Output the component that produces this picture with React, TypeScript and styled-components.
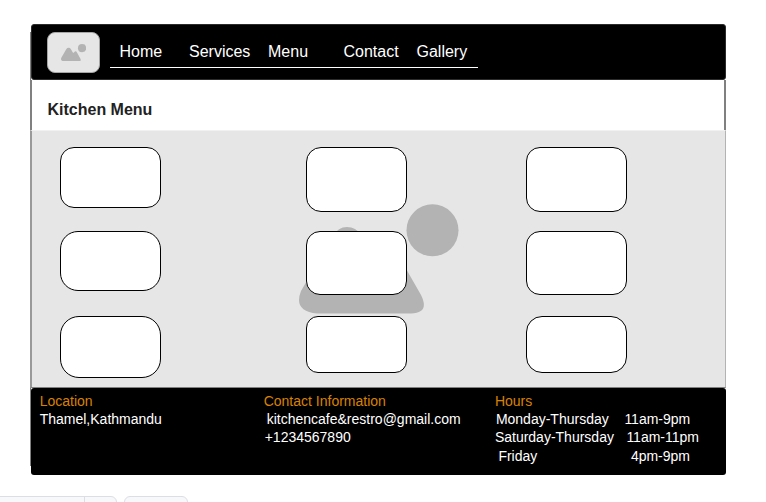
import React from "react";
import styled, { createGlobalStyle } from "styled-components";

const GlobalStyle = createGlobalStyle`
  * { box-sizing: border-box; }
  body {
    margin: 0;
    background: #fff;
    font-family: "Liberation Sans", Arial, sans-serif;
    overflow: hidden;
  }
`;

const Page = styled.div`
  height: 502px;
  padding: 24px 40px 0 30px;
  overflow: hidden;
`;

const Frame = styled.div`
  width: 696px;
  height: 451px;
  display: flex;
  flex-direction: column;
  background: linear-gradient(#808080, #808080) 0 8px / 1px 434px no-repeat;
`;

const Header = styled.header`
  height: 56px;
  margin-left: 1px;
  padding: 8px 0 0 16px;
  display: flex;
  background: #000;
  border: 1px solid #2b2b2b;
  border-radius: 3px;
`;

const Logo = styled.div`
  width: 53px;
  height: 41px;
  margin-top: -1px;
  margin-left: -1px;
  padding: 11px 0 0 13px;
  border: 1px solid #a6a6a6;
  border-radius: 8px;
  background: #e6e6e6;
  svg { display: block; }
`;

const Nav = styled.nav`
  width: 367.5px;
  height: 35px;
  margin-left: 10px;
  padding: 10px 0 0 9.5px;
  display: grid;
  grid-template-columns: 69.5px 79px 75.5px 73px auto;
  border-bottom: 1px solid #fff;
`;

const NavLink = styled.a`
  color: #fff;
  font-size: 16px;
  line-height: 18px;
  white-space: nowrap;
`;

const TitleBar = styled.div`
  height: 50px;
  padding: 21px 0 0 15.5px;
  background: #fff;
  border-left: 2px solid #808080;
  border-right: 2px solid #808080;
`;

const Title = styled.h1`
  margin: 0;
  font-size: 16px;
  line-height: 18px;
  color: #222;
`;

const Gallery = styled.main`
  position: relative;
  height: 258px;
  display: grid;
  grid-template-columns: 246px 220px 101px;
  grid-template-rows: 84px 85px 62px;
  align-items: start;
  padding: 16px 0 0 28px;
  background: #e6e6e6;
  border-top: 1px solid #f1f1f1;
  border-right: 1px solid #b3b3b3;
  border-bottom: 1px solid #808080;
  border-left: 2px solid #999;
`;

const Backdrop = styled.div`
  position: absolute;
  left: 267px;
  top: 73px;
  svg { display: block; }
`;

const Card = styled.div<{ $h: number; $r: number }>`
  position: relative;
  width: 101px;
  height: ${(p) => p.$h}px;
  border: 1px solid #000;
  border-radius: ${(p) => p.$r}px;
  background: #fff;
`;

const Footer = styled.footer`
  height: 87px;
  margin-left: 1px;
  padding: 4px 0 0 8.7px;
  display: grid;
  grid-template-columns: 224px 231.2px auto;
  background: #000;
  border-radius: 3px;
  font-size: 14px;
  line-height: 18px;
  color: #fff;
  white-space: pre;
`;

const Heading = styled.div`
  color: #d98200;
`;

const Line = styled.div<{ $indent?: number; $gap?: number }>`
  padding-left: ${(p) => p.$indent ?? 0}px;
  margin-top: ${(p) => p.$gap ?? 0}px;
  display: flex;
`;

const Day = styled.span<{ $w: number }>`
  width: ${(p) => p.$w}px;
`;

const BottomBar = styled.div`
  display: flex;
  gap: 7px;
  margin: 21px 0 0 -36px;
`;

const Tab = styled.div<{ $w: number }>`
  width: ${(p) => p.$w}px;
  height: 24px;
  display: flex;
  justify-content: flex-end;
  background: #f7f8fa;
  border: 1px solid #dddde6;
  border-radius: 6px;
`;

const TabEnd = styled.div`
  width: 32px;
  border-left: 1px solid #dddde6;
`;

const PicturePlaceholder = ({ width }: { width: number }) => (
  <svg width={width} height={(width * 110) / 160} viewBox="0 0 160 110">
    <circle cx="133.5" cy="26.3" r="26" fill="#b3b3b3" />
    <path
      fill="#b3b3b3"
      d="M34 32 Q39 23 48 23 Q57 23 62 31 L74 52 Q78 59 82 53 Q89 44 94 46 Q98 48 102 56 L122 91 Q131 109 112 109.4 L18 109.4 Q-6 107 2 87 Z"
    />
  </svg>
);

const cards = [
  [61, 14], [65, 15], [65, 14],
  [60, 18], [64, 14], [64, 14],
  [62, 19], [57, 12], [57, 16],
];

export default function App() {
  return (
    <Page>
      <GlobalStyle />
      <Frame>
        <Header>
          <Logo>
            <PicturePlaceholder width={25.3} />
          </Logo>
          <Nav>
            {["Home", "Services", "Menu", "Contact", "Gallery"].map((t) => (
              <NavLink key={t}>{t}</NavLink>
            ))}
          </Nav>
        </Header>
        <TitleBar>
          <Title>Kitchen Menu</Title>
        </TitleBar>
        <Gallery>
          <Backdrop>
            <PicturePlaceholder width={160} />
          </Backdrop>
          {cards.map(([h, r], i) => (
            <Card key={i} $h={h} $r={r} />
          ))}
        </Gallery>
        <Footer>
          <div>
            <Heading>Location</Heading>
            <Line>Thamel,Kathmandu</Line>
          </div>
          <div>
            <Heading>Contact Information</Heading>
            <Line $indent={3}>kitchencafe&amp;restro@gmail.com</Line>
            <Line $indent={1}>+1234567890</Line>
          </div>
          <div>
            <Heading>Hours</Heading>
            <Line $indent={1}>
              <Day $w={128.5}>Monday-Thursday</Day>
              <span>11am-9pm</span>
            </Line>
            <Line>
              <Day $w={131.5}>Saturday-Thursday</Day>
              <span>11am-11pm</span>
            </Line>
            <Line $indent={3.5} $gap={1}>
              <Day $w={132.5}>Friday</Day>
              <span>4pm-9pm</span>
            </Line>
          </div>
        </Footer>
      </Frame>
      <BottomBar>
        <Tab $w={123}>
          <TabEnd />
        </Tab>
        <Tab $w={64} />
      </BottomBar>
    </Page>
  );
}
